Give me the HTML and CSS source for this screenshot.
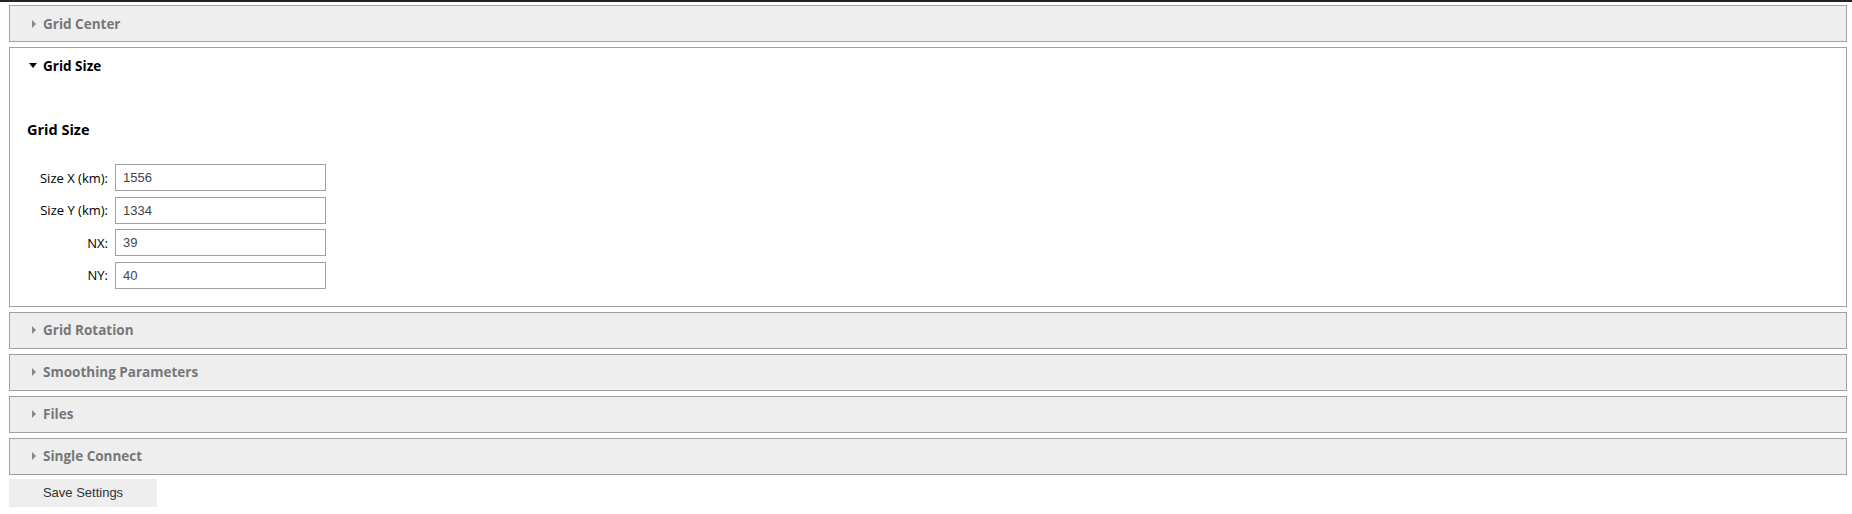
FILE: index.html
```html
<!DOCTYPE html>
<html>
<head>
<meta charset="utf-8">
<link rel="stylesheet" href="styles.css">
</head>
<body>
<div class="topbar"></div>
<div class="page">
  <div class="panel">
    <div class="panel-head collapsed"><span class="tri-right"></span>Grid Center</div>
  </div>
  <div class="panel open">
    <div class="panel-head"><span class="tri-down"></span>Grid Size</div>
    <div class="panel-body">
      <h3 class="section-title">Grid Size</h3>
      <div class="form-grid">
        <label class="field-label">Size X (km):</label><input class="field" type="text" value="1556">
        <label class="field-label">Size Y (km):</label><input class="field" type="text" value="1334">
        <label class="field-label">NX:</label><input class="field" type="text" value="39">
        <label class="field-label">NY:</label><input class="field" type="text" value="40">
      </div>
    </div>
  </div>
  <div class="panel">
    <div class="panel-head collapsed"><span class="tri-right"></span>Grid Rotation</div>
  </div>
  <div class="panel">
    <div class="panel-head collapsed"><span class="tri-right"></span>Smoothing Parameters</div>
  </div>
  <div class="panel">
    <div class="panel-head collapsed"><span class="tri-right"></span>Files</div>
  </div>
  <div class="panel">
    <div class="panel-head collapsed"><span class="tri-right"></span>Single Connect</div>
  </div>
  <button class="save-btn">Save Settings</button>
</div>
</body>
</html>
```
FILE: styles.css
```css
html, body {
  margin: 0;
  padding: 0;
  background: #ffffff;
}
.topbar {
  height: 2px;
  background: #222222;
}
.page {
  padding: 3px 5px 0 9px;
  display: flex;
  flex-direction: column;
  gap: 5px;
}
.panel {
  border: 1px solid #a0a0a0;
  background: #eeeeee;
}
.panel.open {
  background: #ffffff;
}
.panel-head {
  height: 35px;
  display: flex;
  align-items: center;
  padding-left: 19px;
  font-family: "Open Sans", "Noto Sans", sans-serif;
  font-weight: 700;
  font-size: 13.5px;
  color: #000000;
}
.panel-head.collapsed {
  color: #777777;
  padding-left: 22px;
}
.tri-right {
  width: 0;
  height: 0;
  border-top: 4px solid transparent;
  border-bottom: 4px solid transparent;
  border-left: 4px solid #888888;
  margin-right: 7px;
}
.tri-down {
  width: 0;
  height: 0;
  border-left: 4px solid transparent;
  border-right: 4px solid transparent;
  border-top: 5px solid #000000;
  margin-right: 6px;
}
.panel-body {
  padding: 37px 0 17px 17px;
}
.section-title {
  margin: 0 0 24px 0;
  font-family: "Open Sans", "Noto Sans", sans-serif;
  font-weight: 700;
  font-size: 14.5px;
  line-height: 20px;
  color: #000000;
}
.form-grid {
  display: grid;
  grid-template-columns: 81px 211px;
  column-gap: 7px;
  row-gap: 5.5px;
  align-items: center;
}
.field-label {
  text-align: right;
  font-family: "Open Sans", "Noto Sans", sans-serif;
  font-size: 13px;
  color: #000000;
  margin-left: -10px;
}
.field {
  box-sizing: border-box;
  width: 211px;
  height: 27px;
  border: 1px solid #a0a0a0;
  padding: 0 7px;
  font-family: "Liberation Sans", Arial, sans-serif;
  font-size: 13px;
  color: #444444;
  background: #ffffff;
  outline: none;
  margin: 0;
}
.save-btn {
  align-self: flex-start;
  width: 148px;
  height: 28px;
  border: none;
  background: #eeeeee;
  font-family: "Liberation Sans", Arial, sans-serif;
  font-size: 13px;
  color: #333333;
  padding: 0;
  margin: -1px 0 0 0;
}
```
